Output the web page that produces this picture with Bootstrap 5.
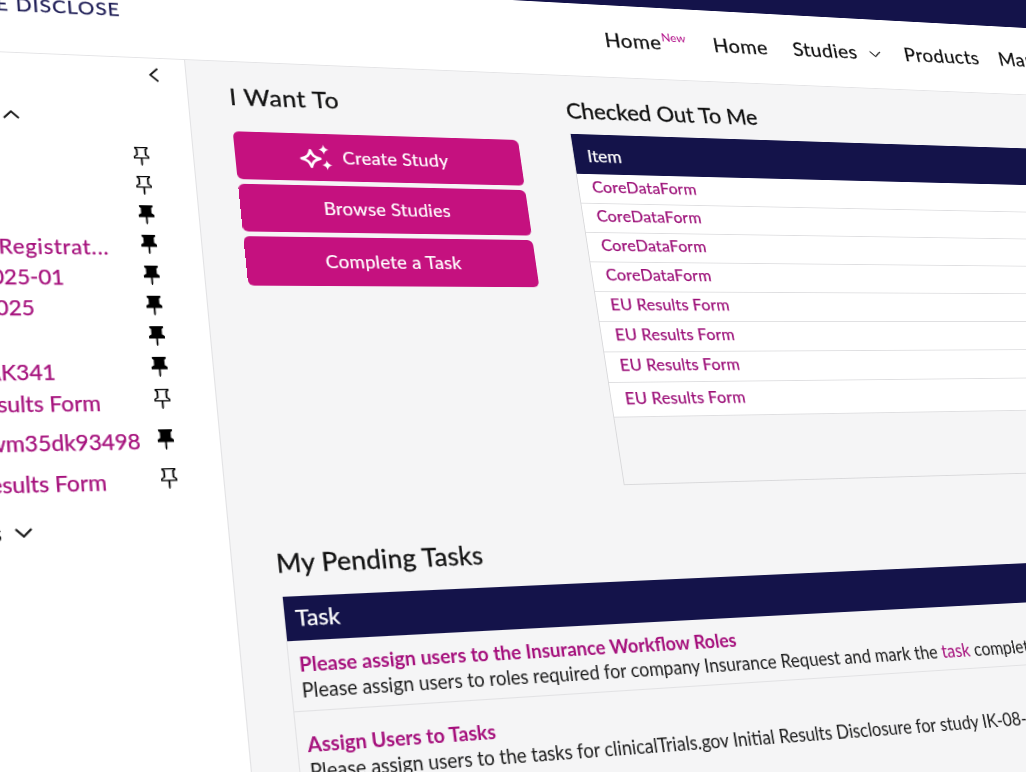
<!DOCTYPE html>
<html lang="en">
<head>
<meta charset="utf-8">
<title>Disclose</title>
<link href="https://cdn.jsdelivr.net/npm/bootstrap@5.3.0/dist/css/bootstrap.min.css" rel="stylesheet">
<style>
html,body{margin:0;height:100%;background:#fff;overflow:hidden}
body{font-family:"Lato","Liberation Sans",sans-serif;color:#111}
.stage{width:1026px;height:772px;overflow:hidden;position:relative;background:#fff}
.sheet{position:absolute;left:0;top:0;width:1400px;height:910px;transform-origin:0 0;
 transform:matrix3d(1.02976,.051488,0,.0001609, .057872,.890105,0,-.00014396, 0,0,1,0, 185,60,0,1) translate(-280px,-130px);background:#fff}
.topband{height:42px;background:#14134a}
.apphead{height:88px;border-bottom:1px solid #e4e4e6;background:#fff}
.logoarea{width:280px;flex:none;padding-right:60px;text-align:right;color:#1d1c55;font-size:20px;letter-spacing:1.1px;white-space:nowrap;padding-top:19px;text-transform:uppercase;-webkit-text-stroke:.3px #1d1c55}
.navzone{padding-left:457px;padding-top:24px;font-size:24px;letter-spacing:.55px;white-space:nowrap;-webkit-text-stroke:.3px #111}
.navzone a{color:#111;text-decoration:none}
.navzone sup{color:#b3138a;font-size:14px;top:-.75em;margin-left:1px;letter-spacing:0;-webkit-text-stroke:0}
.g1{margin-right:32px}.g2{margin-right:31px}.g3{margin-right:30px}.g4{margin-right:26px}
.chevnav{margin-left:15px}
.bodyrow{height:780px}
.sidepanel{width:280px;flex:none;background:#fff;border-right:1px solid #e2e2e4;padding-right:41px;position:relative;color:#a5107c;font-size:20.5px;white-space:nowrap;-webkit-text-stroke:.25px #a5107c}
.collapsebtn{height:38px;margin-right:-15px}
.secthead{height:53px;padding-top:11px;padding-right:123px}
.pinrow{height:31.25px;display:flex;align-items:center;justify-content:flex-end}
.pinrow.tall{height:38.75px}
.pinrow.gaptop{margin-top:5px}
.pinsvg{width:15px;height:20px;flex:none;margin:0 2px;fill:#000}
.m1{margin-right:29px;letter-spacing:.7px}.m2{margin-right:73px}.m3{margin-right:102px}.m4{margin-right:87px}.m5{margin-right:48px}.m6{margin-right:14px}.m7{margin-right:48px}
.lowtext{padding-top:8px}.midtext{padding-top:5px}.smalltext{padding-top:4px}
.secthead2{margin-top:12px;padding-right:136px;color:#111;-webkit-text-stroke:0;gap:11px}
.mainpanel{background:#f5f5f6;padding-left:41px;min-width:0;flex:1}
.leftcol{width:300px;flex:none;margin-right:59px;padding-top:23px}
.rightcol{flex:1;padding-top:25px;min-width:0}
.headline{font-size:25.500px;line-height:30px;font-weight:400;margin:0;color:#111;white-space:nowrap;-webkit-text-stroke:.35px #111}
.wantline{letter-spacing:.7px}
.pendhead{letter-spacing:.25px}
.wantlist{margin-top:24px;gap:5px}
.btn.pinkbtn{background:#c5117f;border:0;color:#fff;height:51.5px;font-size:19px;border-radius:6px;display:flex;align-items:center;justify-content:center;gap:7px;letter-spacing:.3px;-webkit-text-stroke:.2px #fff}
.sparkle{width:39px;height:30px}
.studytext{margin-right:16px}
.checkbox{margin-top:13px;height:386px;border:1px solid #d9d9db;border-top:0;margin-right:-1px}
.table.flat{margin:0;--bs-table-bg:#fff;font-size:18px}
.table.flat th{background:#14134a;color:#fff;font-weight:400;height:46px;padding:4px 0 0 15px;vertical-align:middle;border:0;font-size:19.500px;-webkit-text-stroke:.25px #fff}
.table.flat td{height:33px;padding:0 0 4px 15px;vertical-align:middle;border-bottom:1px solid #dfdfe1}
.table.flat tr:last-child td{height:37px;padding-bottom:2px}
.table.flat a{color:#9c0f78;text-decoration:none;letter-spacing:.25px;-webkit-text-stroke:.25px #9c0f78}
.toprow{height:454px}
.pendhead{margin-top:50px;margin-bottom:18px}
.tasktable{margin-left:2px;border-left:1px solid #e2e2e4}
.taskhead{background:#14134a;color:#fff;height:41.5px;font-size:22px;padding:0 0 3px 10px;display:flex;align-items:center;-webkit-text-stroke:.25px #fff}
.taskrow{height:66px;padding:9px 0 0 9px;border-bottom:1px solid #e2e2e4;line-height:25px;white-space:nowrap;font-size:18.500px;color:#1a1a1a}
.taskrow.nextrow{padding-top:17px;height:120px}
.taskrow b{display:block;color:#a5107c;font-size:19px;font-weight:700}
.taskrow a{color:#a5107c;text-decoration:none}
</style>
</head>
<body>
<div class="stage">
 <div class="sheet">
  <div class="topband"></div>
  <header class="apphead d-flex">
   <div class="logoarea">E Disclose</div>
   <nav class="navzone d-flex align-items-start">
    <a class="g1" href="#">Home<sup>New</sup></a>
    <a class="g2" href="#">Home</a>
    <a class="g3 d-flex align-items-center" href="#">Studies
     <svg class="chevnav" width="15" height="24" viewBox="0 0 15 24"><polyline points="1,11 7.5,17 14,11" fill="none" stroke="#222" stroke-width="1.6"/></svg></a>
    <a class="g4" href="#">Products</a>
    <a href="#">Manage</a>
   </nav>
  </header>
  <div class="bodyrow d-flex">
   <aside class="sidepanel">
    <div class="collapsebtn text-end"><svg width="11" height="16" viewBox="0 0 11 16"><polyline points="9.5,1 2,8 9.5,15" fill="none" stroke="#111" stroke-width="1.8"/></svg></div>
    <div class="secthead text-end"><svg width="16" height="9" viewBox="0 0 16 9"><polyline points="1,8 8,1 15,8" fill="none" stroke="#111" stroke-width="1.8"/></svg></div>
    <svg width="0" height="0" class="position-absolute"><defs>
     <path id="pinfill" d="M4.146.146A.5.5 0 0 1 4.5 0h7a.5.5 0 0 1 .5.5c0 .68-.342 1.174-.646 1.479-.126.125-.25.224-.354.298v4.431l.078.048c.203.127.476.314.751.555C12.36 7.775 13 8.527 13 9.5a.5.5 0 0 1-.5.5h-4v4.5c0 .276-.224 1.5-.5 1.5s-.5-1.224-.5-1.5V10h-4a.5.5 0 0 1-.5-.5c0-.973.64-1.725 1.17-2.189A5.921 5.921 0 0 1 5 6.708V2.277a2.77 2.77 0 0 1-.354-.298C4.342 1.674 4 1.179 4 .5a.5.5 0 0 1 .146-.354z"/>
     <path id="pinline" d="M4.146.146A.5.5 0 0 1 4.5 0h7a.5.5 0 0 1 .5.5c0 .68-.342 1.174-.646 1.479-.126.125-.25.224-.354.298v4.431l.078.048c.203.127.476.314.751.555C12.36 7.775 13 8.527 13 9.5a.5.5 0 0 1-.5.5h-4v4.5c0 .276-.224 1.5-.5 1.5s-.5-1.224-.5-1.5V10h-4a.5.5 0 0 1-.5-.5c0-.973.64-1.725 1.17-2.189A5.921 5.921 0 0 1 5 6.708V2.277a2.77 2.77 0 0 1-.354-.298C4.342 1.674 4 1.179 4 .5a.5.5 0 0 1 .146-.354zm1.58 1.408-.002-.001.002.001zm-.002-.001.002.001A.5.5 0 0 1 6 2v5a.5.5 0 0 1-.276.447h-.002l-.012.007-.054.03a4.922 4.922 0 0 0-.827.58c-.318.278-.585.596-.725.936h7.792c-.14-.34-.407-.658-.725-.936a4.915 4.915 0 0 0-.881-.61l-.012-.006h-.002A.5.5 0 0 1 10 7V2a.5.5 0 0 1 .295-.458 1.775 1.775 0 0 0 .351-.271c.08-.08.155-.17.214-.271H5.14c.06.1.133.191.214.271a1.78 1.78 0 0 0 .37.282z"/>
    </defs></svg>
    <div class="pinrow"><svg class="pinsvg" viewBox="3.5 0 9 16" preserveAspectRatio="none"><use href="#pinline"/></svg></div>
    <div class="pinrow"><svg class="pinsvg" viewBox="3.5 0 9 16" preserveAspectRatio="none"><use href="#pinline"/></svg></div>
    <div class="pinrow"><svg class="pinsvg" viewBox="3.5 0 9 16" preserveAspectRatio="none"><use href="#pinfill"/></svg></div>
    <div class="pinrow"><span class="m1 midtext">Registrat...</span><svg class="pinsvg" viewBox="3.5 0 9 16" preserveAspectRatio="none"><use href="#pinfill"/></svg></div>
    <div class="pinrow"><span class="m2 midtext">2025-01</span><svg class="pinsvg" viewBox="3.5 0 9 16" preserveAspectRatio="none"><use href="#pinfill"/></svg></div>
    <div class="pinrow"><span class="m3 midtext">2025</span><svg class="pinsvg" viewBox="3.5 0 9 16" preserveAspectRatio="none"><use href="#pinfill"/></svg></div>
    <div class="pinrow"><svg class="pinsvg" viewBox="3.5 0 9 16" preserveAspectRatio="none"><use href="#pinfill"/></svg></div>
    <div class="pinrow"><span class="m4 lowtext">IK-08-AK341</span><svg class="pinsvg" viewBox="3.5 0 9 16" preserveAspectRatio="none"><use href="#pinfill"/></svg></div>
    <div class="pinrow"><span class="m5 lowtext">EU Results Form</span><svg class="pinsvg" viewBox="3.5 0 9 16" preserveAspectRatio="none"><use href="#pinline"/></svg></div>
    <div class="pinrow tall gaptop"><span class="m6 smalltext">wm35dk93498</span><svg class="pinsvg" viewBox="3.5 0 9 16" preserveAspectRatio="none"><use href="#pinfill"/></svg></div>
    <div class="pinrow tall"><span class="m7 smalltext">EU Results Form</span><svg class="pinsvg" viewBox="3.5 0 9 16" preserveAspectRatio="none"><use href="#pinline"/></svg></div>
    <div class="secthead2 d-flex justify-content-end align-items-center"><span>Tasks</span><svg width="16" height="9" viewBox="0 0 16 9"><polyline points="1,1 8,8 15,1" fill="none" stroke="#111" stroke-width="1.8"/></svg></div>
   </aside>
   <main class="mainpanel">
    <div class="toprow d-flex">
     <section class="leftcol">
      <h2 class="headline wantline">I Want To</h2>
      <div class="wantlist d-grid">
       <a class="btn pinkbtn" href="#">
        <svg class="sparkle" viewBox="0 0 35 28"><path d="M12 7 C13.5 12 15 14 21 15.5 C15 17 13.5 19 12 24 C10.500 19 9 17 3 15.500 C9 14 10.500 12 12 7Z" fill="none" stroke="#fff" stroke-width="2.6" stroke-linejoin="round"/><path d="M25 1 C25.700 4 27 5.300 30 6 C27 6.700 25.700 8 25 11 C24.300 8 23 6.700 20 6 C23 5.300 24.300 4 25 1Z" fill="#fff"/><path d="M27 17 C27.700 20 29 21.300 32 22 C29 22.700 27.700 24 27 27 C26.300 24 25 22.700 22 22 C25 21.300 26.300 20 27 17Z" fill="#fff"/></svg>
        <span class="studytext">Create Study</span></a>
       <a class="btn pinkbtn" href="#">Browse Studies</a>
       <a class="btn pinkbtn" href="#">Complete a Task</a>
      </div>
     </section>
     <section class="rightcol">
      <h2 class="headline">Checked Out To Me</h2>
      <div class="checkbox">
       <table class="table flat">
        <thead><tr><th>Item</th></tr></thead>
        <tbody>
         <tr><td><a href="#">CoreDataForm</a></td></tr>
         <tr><td><a href="#">CoreDataForm</a></td></tr>
         <tr><td><a href="#">CoreDataForm</a></td></tr>
         <tr><td><a href="#">CoreDataForm</a></td></tr>
         <tr><td><a href="#">EU Results Form</a></td></tr>
         <tr><td><a href="#">EU Results Form</a></td></tr>
         <tr><td><a href="#">EU Results Form</a></td></tr>
         <tr><td><a href="#">EU Results Form</a></td></tr>
        </tbody>
       </table>
      </div>
     </section>
    </div>
    <h2 class="headline pendhead">My Pending Tasks</h2>
    <section class="tasktable">
     <div class="taskhead">Task</div>
     <div class="taskrow"><b>Please assign users to the Insurance Workflow Roles</b>Please assign users to roles required for company Insurance Request and mark the <a href="#">task</a> complete</div>
     <div class="taskrow nextrow"><b>Assign Users to Tasks</b>Please assign users to the tasks for clinicalTrials.gov Initial Results Disclosure for study IK-08-1</div>
    </section>
   </main>
  </div>
 </div>
</div>
<script src="https://cdn.jsdelivr.net/npm/bootstrap@5.3.0/dist/js/bootstrap.bundle.min.js"></script>
</body>
</html>
